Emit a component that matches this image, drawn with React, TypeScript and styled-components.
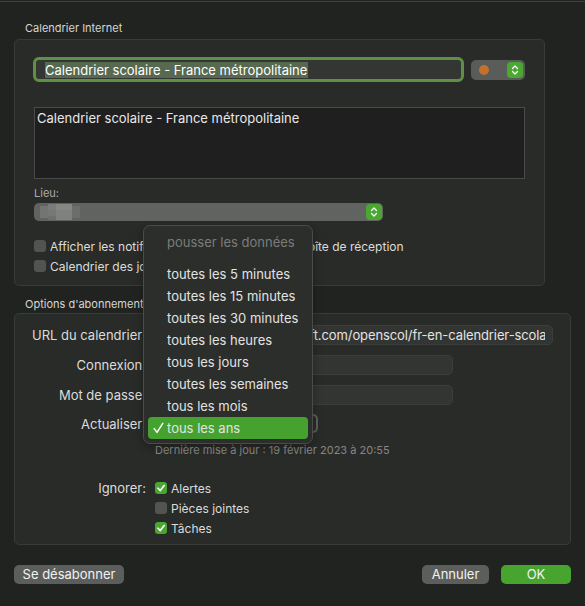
import React from "react";
import styled, { createGlobalStyle } from "styled-components";

const Global = createGlobalStyle`
  html, body { margin: 0; padding: 0; background: #202320; }
  body { font-family: Inter, "Liberation Sans", sans-serif; -webkit-font-smoothing: antialiased; }
  * { box-sizing: border-box; }
`;

const Window = styled.div`
  position: relative;
  width: 585px;
  height: 606px;
  background: #202320;
  border-top: 1px solid #3e403d;
  border-bottom: 1px solid #3e403d;
  margin-top: 1px;
  padding: 0 14px;
  display: flex;
  flex-direction: column;
  color: #dddddd;
  overflow: hidden;
`;

const SectionTitle = styled.div<{ $top: number }>`
  margin-top: ${(p) => p.$top}px;
  margin-left: 11px;
  font-size: 11px;
  line-height: 14px;
  height: 14px;
  color: #d6d6d6;
`;

const GroupBox = styled.div<{ $width: number; $height: number; $gap: number }>`
  margin-top: ${(p) => p.$gap}px;
  width: ${(p) => p.$width}px;
  height: ${(p) => p.$height}px;
  background: #292b28;
  border: 1px solid #393b38;
  border-radius: 5px;
`;

const Group1Inner = styled.div`
  padding: 17px 0 0 18px;
  display: flex;
  flex-direction: column;
`;

const NameRow = styled.div`
  display: flex;
  align-items: center;
  gap: 7px;
`;

const NameField = styled.div`
  width: 431px;
  height: 25px;
  border: 3px solid #5e9146;
  border-radius: 6px;
  background: #333632;
  display: flex;
  align-items: center;
  padding-left: 9px;
`;

const Selection = styled.span`
  background: #576a51;
  color: #ffffff;
  font-size: 13px;
  line-height: 16px;
  padding-right: 1px;
`;

const ColorPopup = styled.div`
  width: 54px;
  height: 20px;
  border-radius: 5px;
  background: #5a5c59;
  display: flex;
  align-items: center;
  justify-content: space-between;
  padding: 0 2px 0 8px;
`;

const Dot = styled.span`
  width: 10px;
  height: 10px;
  border-radius: 50%;
  background: #c4712f;
`;

const StepperBox = styled.span`
  width: 16px;
  height: 16px;
  border-radius: 4px;
  background: #4aa832;
  display: flex;
  align-items: center;
  justify-content: center;
`;

const Stepper = () => (
  <StepperBox>
    <svg width="10" height="12" viewBox="0 0 10 12">
      <path d="M2.5 4.5 L5 2 L7.5 4.5 M2.5 7.5 L5 10 L7.5 7.5" stroke="#ffffff" strokeWidth="1.3" fill="none" strokeLinecap="round" strokeLinejoin="round" />
    </svg>
  </StepperBox>
);

const TextArea = styled.div`
  margin-top: 25px;
  margin-left: 1px;
  width: 491px;
  height: 72px;
  background: #1f1f1f;
  border: 1px solid #4a4b49;
  padding: 2px 2px;
  font-size: 13px;
  line-height: 16px;
  color: #e8e8e8;
`;

const SmallLabel = styled.div`
  margin-top: 7px;
  margin-left: 1px;
  font-size: 11px;
  line-height: 14px;
  color: #a9aaa8;
`;

const LieuPopup = styled.div`
  margin-top: 3px;
  margin-left: 1px;
  width: 349px;
  height: 18px;
  border-radius: 5px;
  background: #616360;
  display: flex;
  align-items: center;
  justify-content: space-between;
  padding: 0 1px 0 6px;
`;

const CheckList = styled.div<{ $top: number }>`
  margin-top: ${(p) => p.$top}px;
  margin-left: 1px;
  display: flex;
  flex-direction: column;
  gap: 8px;
`;

const CheckRow = styled.div`
  display: flex;
  align-items: center;
  gap: 4px;
  height: 12px;
  font-size: 12px;
  color: #dcdcdc;
  white-space: nowrap;
`;

const Box = styled.span<{ $on?: boolean }>`
  width: 12px;
  height: 12px;
  border-radius: 3px;
  background: ${(p) => (p.$on ? "#48a631" : "#525451")};
  display: flex;
  align-items: center;
  justify-content: center;
  flex: none;
`;

const Check = ({ on }: { on?: boolean }) => (
  <Box $on={on}>
    {on && (
      <svg width="10" height="10" viewBox="0 0 10 10">
        <path d="M2 5.2 L4.2 7.6 L8.2 2.4" stroke="#ffffff" strokeWidth="1.6" fill="none" strokeLinecap="round" strokeLinejoin="round" />
      </svg>
    )}
  </Box>
);

const FormGrid = styled.div`
  padding-top: 11px;
  display: grid;
  grid-template-columns: 131px 1fr;
  column-gap: 2px;
  row-gap: 10px;
  align-items: center;
`;

const FormLabel = styled.div`
  text-align: right;
  font-size: 13px;
  color: #dcdcdc;
  white-space: nowrap;
`;

const Field = styled.div<{ $width: number }>`
  width: ${(p) => p.$width}px;
  height: 20px;
  border-radius: 5px;
  background: #333532;
  border: 1px solid #3c3e3b;
  padding: 0 7px 0 6px;
`;

const FieldText = styled.div`
  font-size: 13px;
  color: #e4e4e4;
  line-height: 18px;
  overflow: hidden;
  white-space: nowrap;
  letter-spacing: -0.1px;
`;

const RefreshPopup = styled.div`
  width: 170px;
  height: 19px;
  border-radius: 5px;
  background: #2a2c29;
  border: 2px solid #5c5e5b;
  margin-top: -1px;
`;

const Note = styled.div`
  grid-column: 2;
  margin-top: 0px;
  margin-left: 7px;
  font-size: 11px;
  line-height: 14px;
  color: #868785;
`;

const IgnoreLabel = styled(FormLabel)`
  align-self: start;
  margin-top: 14px;
  line-height: 14px;
`;

const IgnoreList = styled.div`
  margin-top: 15px;
  margin-left: 7px;
  display: flex;
  flex-direction: column;
  gap: 8px;
`;

const ButtonRow = styled.div`
  margin-top: 20px;
  display: flex;
  align-items: center;
  gap: 12px;
  width: 557px;
`;

const Button = styled.div<{ $primary?: boolean; $width: number }>`
  width: ${(p) => p.$width}px;
  height: 19px;
  border-radius: 5px;
  background: ${(p) => (p.$primary ? "#47a42f" : "#5c5e5b")};
  color: #f2f2f2;
  font-size: 13px;
  line-height: 19px;
  text-align: center;
`;

const Spacer = styled.div`
  flex: 1;
`;

const Menu = styled.div`
  position: absolute;
  left: 143px;
  top: 223px;
  width: 170px;
  height: 219px;
  background: #2c2e2b;
  border: 1px solid #4a4c49;
  border-radius: 7px;
  box-shadow: 0 3px 8px rgba(0, 0, 0, 0.3);
  padding: 5px 4px 4px 4px;
  display: flex;
  flex-direction: column;
`;

const MenuItem = styled.div<{ $selected?: boolean; $disabled?: boolean }>`
  position: relative;
  height: 22px;
  line-height: 22px;
  padding-left: 19px;
  font-size: 13px;
  border-radius: 4px;
  color: ${(p) => (p.$disabled ? "#7b7c7a" : "#e2e2e2")};
  background: ${(p) => (p.$selected ? "#46a22f" : "transparent")};
  white-space: nowrap;
`;

const CheckMark = styled.svg`
  position: absolute;
  left: 5px;
  top: 5px;
`;

const Separator = styled.div`
  height: 1px;
  margin: 5px 9px 5px 9px;
  background: #484a47;
`;

const Blur = () => (
  <svg width="44" height="16" viewBox="0 0 44 16">
    <rect x="0" y="2" width="8" height="12" fill="#737572" />
    <rect x="8" y="0" width="8" height="6" fill="#7a7c79" />
    <rect x="16" y="0" width="16" height="6" fill="#858784" />
    <rect x="8" y="6" width="8" height="6" fill="#767875" />
    <rect x="16" y="6" width="16" height="10" fill="#7f817e" />
    <rect x="8" y="12" width="8" height="4" fill="#6e706d" />
    <rect x="32" y="2" width="8" height="12" fill="#6c6e6b" />
  </svg>
);

const menuItems = [
  "toutes les 5 minutes",
  "toutes les 15 minutes",
  "toutes les 30 minutes",
  "toutes les heures",
  "tous les jours",
  "toutes les semaines",
  "tous les mois",
];

export default function App() {
  return (
    <>
      <Global />
      <Window>
        <SectionTitle $top={19}>Calendrier Internet</SectionTitle>
        <GroupBox $width={531} $height={247} $gap={4}>
          <Group1Inner>
            <NameRow>
              <NameField>
                <Selection>Calendrier scolaire - France métropolitaine</Selection>
              </NameField>
              <ColorPopup>
                <Dot />
                <Stepper />
              </ColorPopup>
            </NameRow>
            <TextArea>Calendrier scolaire - France métropolitaine</TextArea>
            <SmallLabel>Lieu:</SmallLabel>
            <LieuPopup>
              <Blur />
              <Stepper />
            </LieuPopup>
            <CheckList $top={19}>
              <CheckRow>
                <Check />
                Afficher les notifications d'invitation dans la boîte de réception
              </CheckRow>
              <CheckRow>
                <Check />
                Calendrier des jours fériés
              </CheckRow>
            </CheckList>
          </Group1Inner>
        </GroupBox>

        <SectionTitle $top={11}>Options d'abonnement</SectionTitle>
        <GroupBox $width={557} $height={232} $gap={2}>
          <FormGrid>
            <FormLabel>URL du calendrier:</FormLabel>
            <Field $width={405}>
              <FieldText>https://calendars.microsoft.com/openscol/fr-en-calendrier-scolaire.ics</FieldText>
            </Field>
            <FormLabel>Connexion:</FormLabel>
            <Field $width={305} />
            <FormLabel>Mot de passe:</FormLabel>
            <Field $width={305} />
            <FormLabel>Actualiser:</FormLabel>
            <RefreshPopup />
            <Note>Dernière mise à jour : 19 février 2023 à 20:55</Note>
            <IgnoreLabel>Ignorer:</IgnoreLabel>
            <IgnoreList>
              <CheckRow>
                <Check on />
                Alertes
              </CheckRow>
              <CheckRow>
                <Check />
                Pièces jointes
              </CheckRow>
              <CheckRow>
                <Check on />
                Tâches
              </CheckRow>
            </IgnoreList>
          </FormGrid>
        </GroupBox>

        <ButtonRow>
          <Button $width={110}>Se désabonner</Button>
          <Spacer />
          <Button $width={67}>Annuler</Button>
          <Button $width={70} $primary>
            OK
          </Button>
        </ButtonRow>

        <Menu>
          <MenuItem $disabled>pousser les données</MenuItem>
          <Separator />
          {menuItems.map((m) => (
            <MenuItem key={m}>{m}</MenuItem>
          ))}
          <MenuItem $selected>
            <CheckMark width="11" height="12" viewBox="0 0 11 12">
              <path d="M1.2 6.6 L4 10.4 L9.8 1.4" stroke="#ffffff" strokeWidth="1.5" fill="none" strokeLinecap="round" strokeLinejoin="round" />
            </CheckMark>
            tous les ans
          </MenuItem>
        </Menu>
      </Window>
    </>
  );
}
